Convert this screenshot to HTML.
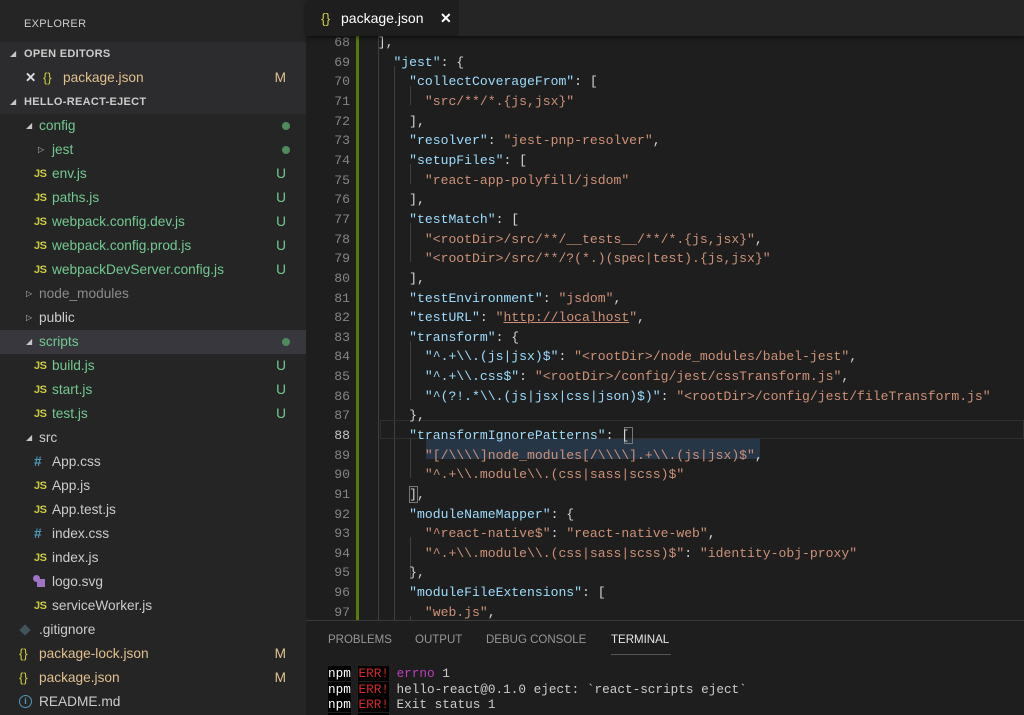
<!DOCTYPE html>
<html><head><meta charset="utf-8"><style>
*{margin:0;padding:0;box-sizing:border-box}
html,body{width:1024px;height:715px;overflow:hidden}
body{background:#1e1e1e;font-family:"Liberation Sans",sans-serif;position:relative}
#side{position:absolute;left:0;top:0;width:306px;height:715px;background:#252526;color:#ccc;font-size:13.7px}
.r{position:absolute;left:0;width:306px;height:24px;line-height:24px;white-space:nowrap}
.r span{position:absolute}
.hdr{font-size:11px;font-weight:bold;color:#ccc;letter-spacing:.3px}
.tri{font-size:8px;color:#c5c5c5}
.js{font-size:11px;font-weight:bold;color:#cbcb41;letter-spacing:-0.5px}
.br{color:#cbcb41;font-size:13px}
.g{color:#73c991}.y{color:#e2c08d}.d{color:#8b8b8b}
.badge{right:20px}
.dot{width:8px;height:8px;border-radius:50%;background:#4c8c5c;top:8px;right:16px}
#tabs{position:absolute;left:306px;top:0;width:718px;height:36px;background:#252526;z-index:3;box-shadow:0 2px 4px rgba(0,0,0,.5)}
#tab{position:absolute;left:0;top:0;width:153px;height:36px;background:#1e1e1e;color:#fff;font-size:14px;line-height:36px}
#ed{position:absolute;left:306px;top:36px;width:718px;height:584px;overflow:hidden}
.l{position:absolute;left:0;width:718px;height:19.64px;line-height:19.64px;font-family:"Liberation Mono",monospace;font-size:13.1px;white-space:pre;color:#d4d4d4}
.n{position:absolute;left:0;width:44px;text-align:right;color:#858585}
.c{position:absolute;left:56px}
.k{color:#9cdcfe}.s{color:#ce9178}
.gd{position:absolute;width:1px;background:#404040}
#panel{position:absolute;left:306px;top:620px;width:718px;height:95px;background:#1e1e1e;border-top:1px solid #3a3a3a;overflow:hidden}
.pt{position:absolute;top:13px;font-size:11.5px;color:#969696}
.t{position:absolute;left:22px;font-family:"Liberation Mono",monospace;font-size:12.7px;white-space:pre;color:#ccc;line-height:15.5px}
.b{background:#000;color:#fff}.e{background:#000;color:#d02929}
</style></head><body>
<div id="side">
 <div class="r" style="top:12px"><span class="hdr" style="left:24px;font-weight:normal">EXPLORER</span></div>
 <div style="position:absolute;top:42px;left:0;width:306px;height:72px;background:#2c2c2e"></div>
 <div class="r" style="top:42px"><span class="tri" style="left:10px">◢</span><span class="hdr" style="left:24px">OPEN EDITORS</span></div>
 <div class="r" style="top:66px"><span style="left:25px;font-weight:bold;color:#ddd">✕</span><span class="br" style="left:43px">{}</span><span class="y" style="left:63px">package.json</span><span class="y badge">M</span></div>
 <div class="r" style="top:90px"><span class="tri" style="left:10px">◢</span><span class="hdr" style="left:24px">HELLO-REACT-EJECT</span></div>
 <div class="r" style="top:114px"><span class="tri" style="left:26px">◢</span><span class="g" style="left:39px">config</span><span class="dot"></span></div>
 <div class="r" style="top:138px"><span class="tri" style="left:38px">▷</span><span class="g" style="left:52px">jest</span><span class="dot"></span></div>
 <div class="r" style="top:162px"><span class="js" style="left:34px">JS</span><span class="g" style="left:52px">env.js</span><span class="g badge">U</span></div>
 <div class="r" style="top:186px"><span class="js" style="left:34px">JS</span><span class="g" style="left:52px">paths.js</span><span class="g badge">U</span></div>
 <div class="r" style="top:210px"><span class="js" style="left:34px">JS</span><span class="g" style="left:52px">webpack.config.dev.js</span><span class="g badge">U</span></div>
 <div class="r" style="top:234px"><span class="js" style="left:34px">JS</span><span class="g" style="left:52px">webpack.config.prod.js</span><span class="g badge">U</span></div>
 <div class="r" style="top:258px"><span class="js" style="left:34px">JS</span><span class="g" style="left:52px">webpackDevServer.config.js</span><span class="g badge">U</span></div>
 <div class="r" style="top:282px"><span class="tri" style="left:26px">▷</span><span class="d" style="left:39px">node_modules</span></div>
 <div class="r" style="top:306px"><span class="tri" style="left:26px">▷</span><span style="left:39px">public</span></div>
 <div class="r" style="top:330px;background:#37373d"><span class="tri" style="left:26px">◢</span><span class="g" style="left:39px">scripts</span><span class="dot"></span></div>
 <div class="r" style="top:354px"><span class="js" style="left:34px">JS</span><span class="g" style="left:52px">build.js</span><span class="g badge">U</span></div>
 <div class="r" style="top:378px"><span class="js" style="left:34px">JS</span><span class="g" style="left:52px">start.js</span><span class="g badge">U</span></div>
 <div class="r" style="top:402px"><span class="js" style="left:34px">JS</span><span class="g" style="left:52px">test.js</span><span class="g badge">U</span></div>
 <div class="r" style="top:426px"><span class="tri" style="left:26px">◢</span><span style="left:39px">src</span></div>
 <div class="r" style="top:450px"><span style="left:34px;color:#519aba;font-weight:bold">#</span><span style="left:52px">App.css</span></div>
 <div class="r" style="top:474px"><span class="js" style="left:34px">JS</span><span style="left:52px">App.js</span></div>
 <div class="r" style="top:498px"><span class="js" style="left:34px">JS</span><span style="left:52px">App.test.js</span></div>
 <div class="r" style="top:522px"><span style="left:34px;color:#519aba;font-weight:bold">#</span><span style="left:52px">index.css</span></div>
 <div class="r" style="top:546px"><span class="js" style="left:34px">JS</span><span style="left:52px">index.js</span></div>
 <div class="r" style="top:570px"><span style="left:33px;top:5px;width:7px;height:7px;border-radius:50%;background:#a074c4"></span><span style="left:37px;top:9px;width:8px;height:8px;background:#a074c4"></span><span style="left:52px">logo.svg</span></div>
 <div class="r" style="top:594px"><span class="js" style="left:34px">JS</span><span style="left:52px">serviceWorker.js</span></div>
 <div class="r" style="top:618px"><span style="left:21px;top:8px;width:8px;height:8px;background:#41535b;transform:rotate(45deg)"></span><span style="left:39px">.gitignore</span></div>
 <div class="r" style="top:642px"><span class="br" style="left:19px">{}</span><span class="y" style="left:39px">package-lock.json</span><span class="y badge">M</span></div>
 <div class="r" style="top:666px"><span class="br" style="left:19px">{}</span><span class="y" style="left:39px">package.json</span><span class="y badge">M</span></div>
 <div class="r" style="top:690px"><span style="left:19px;top:5px;width:13px;height:13px;border:1.5px solid #519aba;border-radius:50%;color:#519aba;font-size:9px;line-height:10px;text-align:center;font-weight:bold">i</span><span style="left:39px">README.md</span></div>
</div>
<div id="tabs"><div id="tab"><span style="position:absolute;left:15px;color:#cbcb41">{}</span><span style="position:absolute;left:35px">package.json</span><span style="position:absolute;left:134px;font-weight:bold">✕</span></div></div>
<div id="ed">
<div class="gd" style="left:72px;top:0;height:584px"></div>
<div class="gd" style="left:88px;top:30px;height:554px"></div>
<div class="gd" style="left:104px;top:49.6px;height:19.6px"></div>
<div class="gd" style="left:104px;top:128.2px;height:19.6px"></div>
<div class="gd" style="left:104px;top:187.1px;height:39.3px"></div>
<div class="gd" style="left:104px;top:304.9px;height:58.9px"></div>
<div class="gd" style="left:104px;top:403.1px;height:39.3px"></div>
<div class="gd" style="left:104px;top:501.3px;height:39.3px"></div>
<div class="gd" style="left:104px;top:580px;height:10px"></div>
<div style="position:absolute;left:50px;top:0;width:3px;height:584px;background:#587c0c"></div>
<div style="position:absolute;left:74px;top:383.5px;width:644px;height:19.6px;border:1px solid #2f2f2f"></div>
<div style="position:absolute;left:120px;top:403.1px;width:334px;height:19.6px;background:#263646"></div>
<div style="position:absolute;left:318px;top:390.5px;width:9px;height:17px;border:1px solid #777"></div>
<div style="position:absolute;left:103px;top:449.5px;width:9px;height:17px;border:1px solid #777"></div>
<div id="code"></div>
</div>
<div id="panel">
 <span class="pt" style="left:22px">PROBLEMS</span><span class="pt" style="left:109px">OUTPUT</span><span class="pt" style="left:180px">DEBUG CONSOLE</span><span class="pt" style="left:305px;color:#e7e7e7">TERMINAL</span>
 <div style="position:absolute;left:305px;top:33px;width:60px;height:1px;background:#555"></div>
 <div class="t" style="top:45px"><span class="b">npm</span> <span class="e">ERR!</span> <span style="color:#bc3fbc">errno</span> 1</div>
 <div class="t" style="top:60.5px"><span class="b">npm</span> <span class="e">ERR!</span> hello-react@0.1.0 eject: `react-scripts eject`</div>
 <div class="t" style="top:76px"><span class="b">npm</span> <span class="e">ERR!</span> Exit status 1</div>
 <div class="t" style="top:91.5px"><span class="b">   </span> <span class="e">ERR!</span></div>
</div>
<script>
var L=[
[68,'  ],'],
[69,'    <k>"jest"</k>: {'],
[70,'      <k>"collectCoverageFrom"</k>: ['],
[71,'        <s>"src/**/*.{js,jsx}"</s>'],
[72,'      ],'],
[73,'      <k>"resolver"</k>: <s>"jest-pnp-resolver"</s>,'],
[74,'      <k>"setupFiles"</k>: ['],
[75,'        <s>"react-app-polyfill/jsdom"</s>'],
[76,'      ],'],
[77,'      <k>"testMatch"</k>: ['],
[78,'        <s>"&lt;rootDir&gt;/src/**/__tests__/**/*.{js,jsx}"</s>,'],
[79,'        <s>"&lt;rootDir&gt;/src/**/?(*.)(spec|test).{js,jsx}"</s>'],
[80,'      ],'],
[81,'      <k>"testEnvironment"</k>: <s>"jsdom"</s>,'],
[82,'      <k>"testURL"</k>: <s>"<u>http://localhost</u>"</s>,'],
[83,'      <k>"transform"</k>: {'],
[84,'        <k>"^.+\\\\.(js|jsx)$"</k>: <s>"&lt;rootDir&gt;/node_modules/babel-jest"</s>,'],
[85,'        <k>"^.+\\\\.css$"</k>: <s>"&lt;rootDir&gt;/config/jest/cssTransform.js"</s>,'],
[86,'        <k>"^(?!.*\\\\.(js|jsx|css|json)$)"</k>: <s>"&lt;rootDir&gt;/config/jest/fileTransform.js"</s>'],
[87,'      },'],
[88,'      <k>"transformIgnorePatterns"</k>: ['],
[89,'        <s>"[/\\\\\\\\]node_modules[/\\\\\\\\].+\\\\.(js|jsx)$"</s>,'],
[90,'        <s>"^.+\\\\.module\\\\.(css|sass|scss)$"</s>'],
[91,'      ],'],
[92,'      <k>"moduleNameMapper"</k>: {'],
[93,'        <s>"^react-native$"</s>: <s>"react-native-web"</s>,'],
[94,'        <s>"^.+\\\\.module\\\\.(css|sass|scss)$"</s>: <s>"identity-obj-proxy"</s>'],
[95,'      },'],
[96,'      <k>"moduleFileExtensions"</k>: ['],
[97,'        <s>"web.js"</s>,']];
var h='';
L.forEach(function(x){var top=-2.8+(x[0]-68)*19.64;
var c=x[1].replace(/<k>/g,'<span class="k">').replace(/<\/k>/g,'</span>').replace(/<s>/g,'<span class="s">').replace(/<\/s>/g,'</span>');
h+='<div class="l" style="top:'+top+'px"><span class="n"'+(x[0]==88?' style="color:#c6c6c6"':'')+'>'+x[0]+'</span><span class="c">'+c+'</span></div>';});
document.getElementById('code').outerHTML=h;
</script>
</body></html>
